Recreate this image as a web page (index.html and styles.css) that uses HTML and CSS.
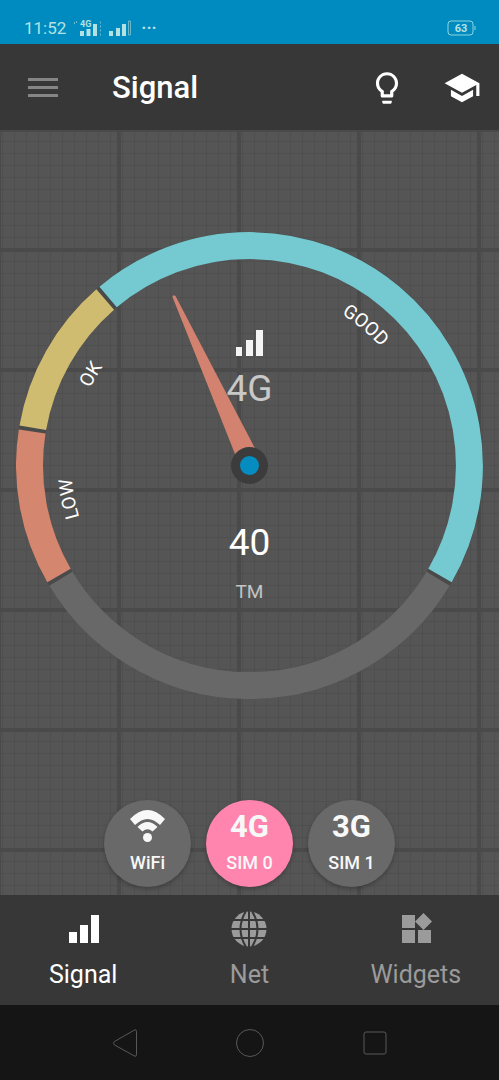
FILE: index.html
```html
<!DOCTYPE html>
<html lang="en">
<head>
<meta charset="utf-8">
<meta name="viewport" content="width=device-width, initial-scale=1">
<title>Signal</title>
<link rel="stylesheet" href="styles.css">
</head>
<body>
<div class="status">
  <span class="status-time">11:52</span>
  <svg class="status-cells" width="60" height="18" viewBox="0 0 60 18" aria-hidden="true">
    <path class="fill" d="M6 12h4v5H6zM12.500 10h4v7h-4zM19 5h4v12h-4zM35 12h4v5h-4zM42 9h4v8h-4zM48 5h4v12h-4z"/>
    <path class="thin" d="M26.500 2.500v2m0 2v2m0 2v2m0 2v2M54.500 2h2v14h-2z"/>
    <path class="thin" d="M.5 3v2m2-3v2"/>
    <text class="status-4g" x="6" y="8">4G</text>
  </svg>
  <span class="status-more">···</span>
  <svg class="battery" width="29" height="16" viewBox="0 0 29 16" role="img" aria-label="Battery 63">
    <rect x="1" y="1" width="25" height="14" rx="3"/>
    <path d="M28 6v4"/>
    <text x="14" y="12">63</text>
  </svg>
</div>
<header class="appbar">
  <button class="icon-btn" type="button" aria-label="Menu">
    <svg width="30" height="22" viewBox="0 0 30 22"><path class="menu-lines" d="M0 2.500h30M0 10.500h30M0 18.500h30"/></svg>
  </button>
  <h1 class="title">Signal</h1>
  <button class="icon-btn" type="button" aria-label="Tips">
    <svg width="38" height="38" viewBox="0 0 24 24"><path d="M9 21c0 .55.45 1 1 1h4c.55 0 1-.45 1-1v-1H9v1zm3-19C8.140 2 5 5.140 5 9c0 2.380 1.190 4.470 3 5.740V17c0 .55.45 1 1 1h6c.55 0 1-.45 1-1v-2.260c1.810-1.270 3-3.360 3-5.740 0-3.860-3.140-7-7-7zm2.850 11.100-.85.6V16h-4v-2.300l-.85-.6C7.800 12.160 7 10.630 7 9c0-2.760 2.240-5 5-5s5 2.240 5 5c0 1.630-.8 3.160-2.150 4.100z"/></svg>
  </button>
  <button class="icon-btn" type="button" aria-label="Learn">
    <svg width="38" height="38" viewBox="0 0 24 24"><path d="M5 13.180v4L12 21l7-3.820v-4L12 17l-7-3.820zM12 3 1 9l11 6 9-4.910V17h2V9L12 3z"/></svg>
  </button>
</header>
<main class="panel">
  <svg class="gauge" viewBox="0 0 467 467" role="img" aria-label="Signal strength 40, good">
    <defs>
      <path id="label-arc" d="M56.500 233.500a177 177 0 0 1 354 0"/>
      <path id="low-arc" d="M79.400 322.500A178 178 0 0 1 79.400 144.500"/>
    </defs>
    <circle class="ring gap" cx="233.500" cy="233.500" r="220"/>
    <path class="ring rest" d="M422.100 346.800A220 220 0 0 1 44.900 346.800"/>
    <path class="ring low" d="M43 343.500A220 220 0 0 1 16.150 199.500"/>
    <path class="ring ok" d="M16.800 195.700A220 220 0 0 1 89.200 67.500"/>
    <path class="ring good" d="M92.100 65A220 220 0 0 1 424 343.500"/>
    <text class="zone"><textPath href="#low-arc" startOffset="32.500%">LOW</textPath></text>
    <text class="zone"><textPath href="#label-arc" startOffset="16.600%">OK</textPath></text>
    <text class="zone"><textPath href="#label-arc" startOffset="72%">GOOD</textPath></text>
    <path class="bars" d="M220 115h6v9h-6zM230 108h7v16h-7zM240 98h7v26h-7z"/>
    <text class="network" x="233.500" y="169">4G</text>
    <path class="needle" d="M156.500 65q0-3 3-1L243 224l-20 8z"/>
    <circle class="hub" cx="233.500" cy="233.500" r="18.500"/>
    <circle class="hub-core" cx="233.500" cy="233.500" r="9.500"/>
    <text class="value" x="233.500" y="323">40</text>
    <text class="carrier" x="233.500" y="366">TM</text>
  </svg>
  <div class="sources">
    <button class="source" type="button">
      <svg class="source-icon" width="35" height="34" viewBox="0 0 35 34"><path d="M0 9Q17.500-9 35 9L30 15Q17.500 3 5 15zM7.500 17Q17.500 7 27.500 17L22.500 21.500Q17.500 17 12.500 21.500z"/><circle cx="17.500" cy="27.500" r="4.500"/></svg>
      <span class="source-name">WiFi</span>
    </button>
    <button class="source active" type="button"><span class="source-type">4G</span><span class="source-name">SIM 0</span></button>
    <button class="source" type="button"><span class="source-type">3G</span><span class="source-name">SIM 1</span></button>
  </div>
</main>
<nav class="tabs">
  <a class="tab current" href="#signal">
    <svg width="36" height="36" viewBox="0 0 36 36"><path d="M4 21h8v11H4zM15 14h8v18h-8zM26 4h8v28h-8z"/></svg>
    Signal
  </a>
  <a class="tab" href="#net">
    <svg width="36" height="36" viewBox="0 0 36 36"><circle cx="18" cy="18" r="17.500"/><path class="globe-lines" d="M18 0v36M0 18h36M2 9h32M2 27h32M15 0Q4 18 15 36M21 0Q32 18 21 36"/></svg>
    Net
  </a>
  <a class="tab" href="#widgets">
    <svg width="36" height="36" viewBox="0 0 36 36"><path d="M4 4h13v13H4zM4 19h13v13H4zM20 19h13v13H20zM25.500 2l8.500 8.500-8.500 8.500-8.500-8.500z"/></svg>
    Widgets
  </a>
</nav>
<footer class="system">
  <button class="sys-btn" type="button" aria-label="Back"><svg width="30" height="30" viewBox="0 0 30 30"><path d="M24.500 2Q26.500 1 26.500 3.500v23Q26.500 29 24.500 28L4.500 17Q2.500 15 4.500 13.500z"/></svg></button>
  <button class="sys-btn" type="button" aria-label="Home"><svg width="30" height="30" viewBox="0 0 30 30"><circle cx="15" cy="15" r="13.500"/></svg></button>
  <button class="sys-btn" type="button" aria-label="Recent apps"><svg width="30" height="30" viewBox="0 0 30 30"><rect x="4" y="4" width="22" height="22" rx="2"/></svg></button>
</footer>
</body>
</html>
```
FILE: styles.css
```css
* { box-sizing: border-box; }

body {
  margin: 0;
  min-height: 100vh;
  display: flex;
  flex-direction: column;
  font-family: Roboto, "Noto Sans", sans-serif;
  color: #fff;
  background: #151515;
}

button {
  font: inherit;
  color: inherit;
  background: none;
  border: 0;
  padding: 0;
  cursor: pointer;
}

svg { display: block; fill: currentColor; }

.status {
  display: flex;
  align-items: center;
  height: 44px;
  padding: 12px 23px 0 24px;
  background: #008bc0;
  color: #b4e2e3;
  font-size: 17px;
}

.status-cells { margin-left: 8px; }
.status-4g { font-size: 9px; font-weight: 700; }
.thin { fill: none; stroke: #6bb9cc; }
.status-more { margin-left: 7px; font-weight: 700; }

.battery { margin-left: auto; }
.battery rect, .battery path { fill: none; stroke: #8fd5dc; stroke-width: 1; }
.battery text { font-size: 11px; font-weight: 700; text-anchor: middle; }

.appbar {
  display: flex;
  align-items: center;
  height: 86px;
  padding: 1px 18px 0 28px;
  background: #373737;
}

.menu-lines { stroke: #858585; stroke-width: 3; }

.title {
  flex: 1;
  margin: 0 0 0 54px;
  font-size: 31px;
  font-weight: 500;
  line-height: 40px;
}

.icon-btn + .icon-btn { margin-left: 37px; }

/* Graph paper: heavy lines every 120px, fine lines every 12px */
.panel {
  flex: 1;
  display: flex;
  flex-direction: column;
  justify-content: space-between;
  gap: 24px;
  padding: 102px 16px 8px;
  background-color: #555;
  background-image:
    linear-gradient(90deg, #4a4a4a 4px, transparent 4px),
    linear-gradient(#4a4a4a 4px, transparent 4px),
    linear-gradient(90deg, #4f4f4f 1px, transparent 1px),
    linear-gradient(#4f4f4f 1px, transparent 1px);
  background-size: 120px 120px, 120px 120px, 12px 12px, 12px 12px;
  background-position: 117px 0, 0 118px, 2px 0, 0 11px;
}

.gauge { width: 100%; }

.ring { fill: none; stroke-width: 27; }
.gap { stroke: #4a4a4a; }
.rest { stroke: #686868; }
.low { stroke: #d5866f; }
.ok { stroke: #d0bc70; }
.good { stroke: #74cad0; }

.zone, .network, .value, .carrier { text-anchor: middle; }
.zone { font-size: 19px; }
.network { font-size: 37px; fill: #c8c8c8; }
.value { font-size: 37px; }
.carrier { font-size: 19px; fill: #c4c4c4; }
.bars { fill: #f4f4f4; }
.needle { fill: #d3826f; }
.hub { fill: #3c3c3c; }
.hub-core { fill: #058dc1; }

.sources { display: flex; justify-content: center; gap: 15px; }

.source {
  display: flex;
  flex-direction: column;
  align-items: center;
  width: 87px;
  height: 87px;
  padding-top: 10px;
  border-radius: 50%;
  background: #696969;
  color: #f8f8f8;
  font-weight: 500;
  box-shadow: 0 2px 4px rgba(0, 0, 0, 0.25);
}

.source.active { background: #ff85ae; }
.source-icon { height: 34px; }
.source-type { font-size: 31px; font-weight: 700; line-height: 34px; }
.source-name { margin-top: 8px; font-size: 18px; line-height: 22px; }

.tabs {
  display: grid;
  grid-template-columns: repeat(3, 1fr);
  height: 110px;
  background: #373737;
}

.tab {
  display: flex;
  flex-direction: column;
  align-items: center;
  gap: 13px;
  padding-top: 16px;
  color: #9b9b9b;
  font-size: 25px;
  line-height: 30px;
  text-decoration: none;
}

.tab.current { color: #fff; }
.globe-lines { fill: none; stroke: #373737; stroke-width: 2; }

.system {
  display: flex;
  justify-content: center;
  align-items: center;
  gap: 95px;
  height: 75px;
  background: #151515;
  color: #585858;
}

.sys-btn svg { fill: none; stroke: currentColor; stroke-width: 1; }
```
